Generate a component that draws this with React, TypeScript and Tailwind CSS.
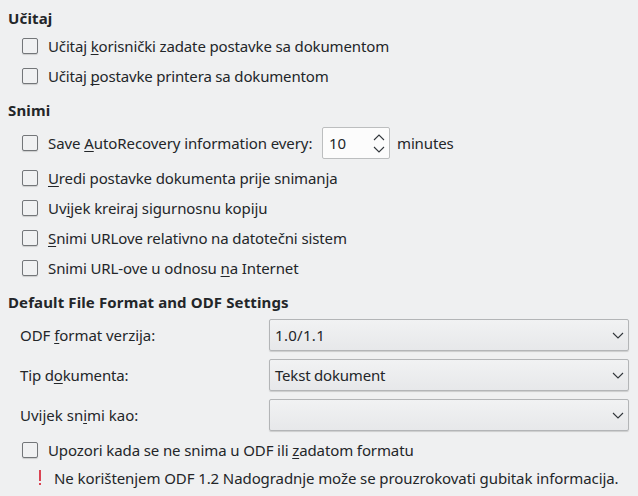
import type { ReactNode } from "react";

function Key({ children }: { children: ReactNode }) {
  return (
    <span className="underline decoration-1 underline-offset-2 [text-decoration-skip-ink:none]">
      {children}
    </span>
  );
}

function Box() {
  return (
    <span className="mr-[10px] size-4 shrink-0 rounded-[2px] border border-[#737679] bg-[#f0f1f2] shadow-[0_1px_1px_rgba(0,0,0,0.15)]" />
  );
}

function Check({ children, tracking }: { children: ReactNode; tracking: string }) {
  return (
    <label className="flex h-[30px] items-center pl-[22px]">
      <Box />
      <span className={tracking}>{children}</span>
    </label>
  );
}

function Chevron({ up = false }: { up?: boolean }) {
  return (
    <svg width="12" height="7" viewBox="0 0 12 7" fill="none" stroke="#31363b" strokeWidth="1.1">
      <path d={up ? "M1 6 6 1l5 5" : "M1 1l5 5 5-5"} />
    </svg>
  );
}

function Combo({ label, value, tracking = "" }: { label: ReactNode; value: string; tracking?: string }) {
  return (
    <div className="flex h-8 items-center pl-5">
      <span className="w-[249px]">{label}</span>
      <div className="flex h-8 w-[360px] items-center justify-between rounded-[2px] border border-[#b3b5b7] bg-linear-to-b from-[#f1f2f3] to-[#e7e8ea] pr-1 pl-[5px] shadow-[0_1px_1px_rgba(0,0,0,0.15)]">
        <span className={tracking}>{value}</span>
        <Chevron />
      </div>
    </div>
  );
}

export default function App() {
  return (
    <main className="h-[496px] w-[638px] overflow-hidden bg-[#eff0f1] pt-[5px] font-['Noto_Sans',sans-serif] text-[15px] leading-5 whitespace-nowrap text-[#232629]">
      <h2 className="flex h-[26px] items-center pl-2 font-bold tracking-[0.15px]">Učitaj</h2>
      <Check tracking="tracking-[-0.14px]">Učitaj <Key>k</Key>orisnički zadate postavke sa dokumentom</Check>
      <Check tracking="tracking-[-0.17px]">Učitaj <Key>p</Key>ostavke printera sa dokumentom</Check>
      <h2 className="flex h-9 items-center pt-px pl-2 font-bold tracking-[0.15px]">Snimi</h2>
      <div className="mb-1 flex h-8 items-center pl-[22px]">
        <Box />
        <span className="w-[274px] tracking-[-0.08px]">Save <Key>A</Key>utoRecovery information every:</span>
        <div className="mr-[7px] flex h-8 w-[68px] items-center justify-between rounded-[2px] border border-[#bcbebf] bg-[#fcfcfc] pr-1 pl-[6px]">
          <span>10</span>
          <div className="flex flex-col gap-[5px]">
            <Chevron up />
            <Chevron />
          </div>
        </div>
        <span className="tracking-[-0.14px]">minutes</span>
      </div>
      <Check tracking="tracking-[-0.13px]"><Key>U</Key>redi postavke dokumenta prije snimanja</Check>
      <Check tracking="tracking-[-0.08px]">Uv<Key>i</Key>jek kreiraj sigurnosnu kopiju</Check>
      <Check tracking="tracking-[-0.12px]"><Key>S</Key>nimi URLove relativno na datotečni sistem</Check>
      <Check tracking="tracking-[-0.11px]">Snimi URL-ove u odnosu <Key>n</Key>a Internet</Check>
      <h2 className="flex h-9 items-center pt-[2px] pl-2 font-bold tracking-[0.12px]">Default File Format and ODF Settings</h2>
      <div className="mb-1 flex flex-col gap-2">
        <Combo label={<span className="tracking-[-0.05px]">ODF <Key>f</Key>ormat verzija:</span>} value="1.0/1.1" tracking="tracking-[0.3px]" />
        <Combo label={<span className="tracking-[-0.15px]">Tip d<Key>o</Key>kumenta:</span>} value="Tekst dokument" tracking="tracking-[-0.2px]" />
        <Combo label={<>Uvijek sn<Key>i</Key>mi kao:</>} value="" />
      </div>
      <Check tracking="tracking-[-0.11px]">Upozori kada se ne snima u ODF ili <Key>z</Key>adatom formatu</Check>
      <div className="flex h-[26px] items-center pl-[38px]">
        <svg className="mr-3" width="4" height="16" viewBox="0 0 4 16" fill="#da4453">
          <path d="M1 0h2v11H1zM1 13h2v2H1z" />
        </svg>
        <span className="tracking-[-0.09px]">Ne korištenjem ODF 1.2 Nadogradnje može se prouzrokovati gubitak informacija.</span>
      </div>
    </main>
  );
}
